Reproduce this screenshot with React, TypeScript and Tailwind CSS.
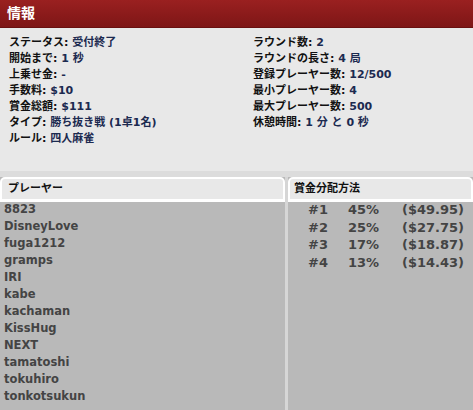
import React from "react";

const jp = { fontFamily: '"DejaVu Sans", "Noto Sans CJK JP", sans-serif' };

const leftInfo: [string, string][] = [
  ["ステータス", "受付終了"],
  ["開始まで", "1 秒"],
  ["上乗せ金", "-"],
  ["手数料", "$10"],
  ["賞金総額", "$111"],
  ["タイプ", "勝ち抜き戦 (1卓1名)"],
  ["ルール", "四人麻雀"],
];

const rightInfo: [string, string][] = [
  ["ラウンド数", "2"],
  ["ラウンドの長さ", "4 局"],
  ["登録プレーヤー数", "12/500"],
  ["最小プレーヤー数", "4"],
  ["最大プレーヤー数", "500"],
  ["休憩時間", "1 分 と 0 秒"],
];

const players = [
  "8823",
  "DisneyLove",
  "fuga1212",
  "gramps",
  "IRI",
  "kabe",
  "kachaman",
  "KissHug",
  "NEXT",
  "tamatoshi",
  "tokuhiro",
  "tonkotsukun",
];

const prizes: [string, string, string][] = [
  ["#1", "45%", "($49.95)"],
  ["#2", "25%", "($27.75)"],
  ["#3", "17%", "($18.87)"],
  ["#4", "13%", "($14.43)"],
];

function InfoRow({ label, value }: { label: string; value: string }) {
  return (
    <div className="h-[16px] leading-[16px] text-[11px] font-bold whitespace-nowrap">
      <span className="text-[#111]">{label}: </span>
      <span className="text-[#1c2a50]">{value}</span>
    </div>
  );
}

export default function App() {
  return (
    <div className="w-[473px] h-[410px] overflow-hidden bg-[#b9b9b9] flex flex-col" style={jp}>
      <div className="h-[28px] shrink-0 bg-gradient-to-b from-[#9a2020] to-[#7e1616] flex items-center px-[7px] text-white font-bold text-[14px] border-b border-[#6a1010]">
        情報
      </div>
      <div className="h-[143px] shrink-0 bg-[#e8e8e8] pt-[7px] pl-[9px] flex">
        <div className="w-[244px] flex flex-col">
          {leftInfo.map(([l, v]) => (
            <InfoRow key={l} label={l} value={v} />
          ))}
        </div>
        <div className="flex flex-col">
          {rightInfo.map(([l, v]) => (
            <InfoRow key={l} label={l} value={v} />
          ))}
        </div>
      </div>
      <div className="h-[6px] shrink-0 bg-[#dcdcdc]" />
      <div className="flex flex-1 min-h-0">
        <div className="w-[285px] flex flex-col">
          <div className="h-[25px] shrink-0 bg-[#e8e8e8] border-2 border-b-[3px] border-white rounded-t-[5px] flex items-center pl-[6px] text-[11px] font-bold text-[#111]">
            プレーヤー
          </div>
          <div className="pl-[4px] -mt-[1px]">
            {players.map((p) => (
              <div key={p} className="h-[17px] leading-[17px] text-[11.5px] font-bold text-[#444]">
                {p}
              </div>
            ))}
          </div>
        </div>
        <div className="w-[3px] bg-[#d6d6d6]" />
        <div className="flex-1 flex flex-col">
          <div className="h-[25px] shrink-0 bg-[#e8e8e8] border-2 border-b-[3px] border-white rounded-t-[5px] flex items-center pl-[4px] text-[11px] font-bold text-[#111]">
            賞金分配方法
          </div>
          <div className="-mt-[1px]">
            {prizes.map(([r, pct, amt]) => (
              <div key={r} className="h-[17.7px] leading-[17.7px] text-[13px] font-bold text-[#444] flex whitespace-nowrap">
                <span className="pl-[20px] w-[60px]">{r}</span>
                <span className="w-[53px]">{pct}</span>
                <span className="pl-[1px]">{amt}</span>
              </div>
            ))}
          </div>
        </div>
      </div>
    </div>
  );
}
